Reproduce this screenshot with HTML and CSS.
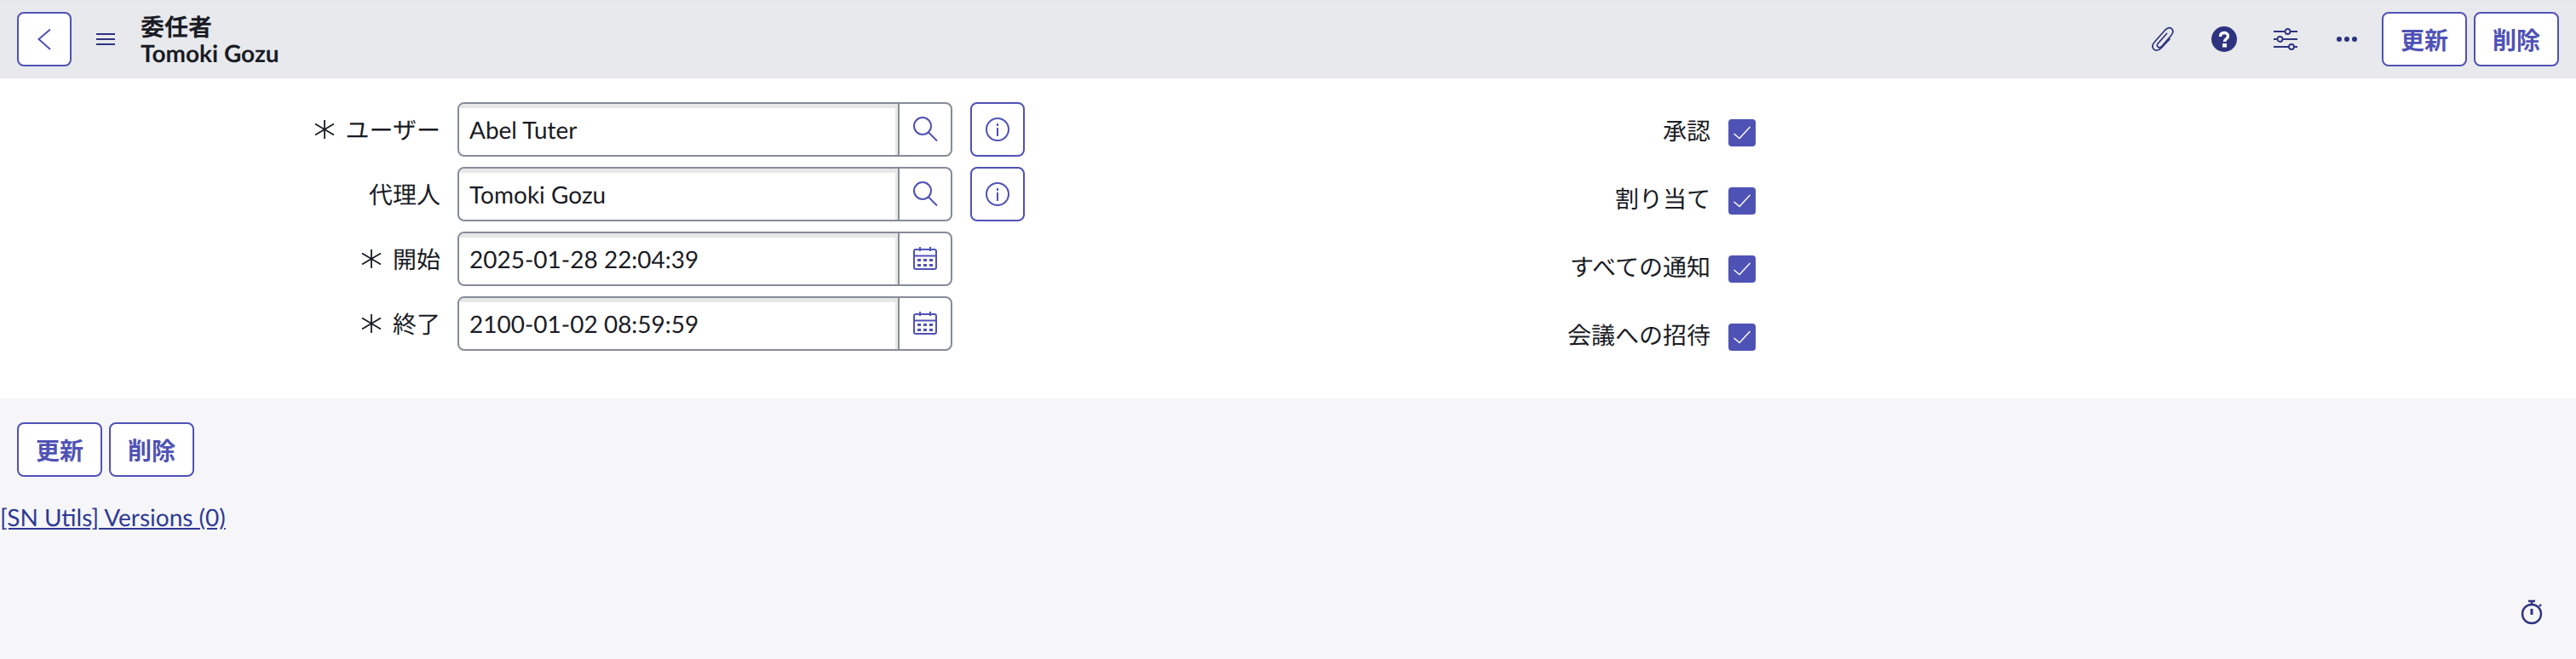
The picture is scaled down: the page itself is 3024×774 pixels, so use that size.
FILE: index.html
```html
<!DOCTYPE html>
<html lang="ja">
<head>
  <meta charset="UTF-8" />
  <title>委任者 Tomoki Gozu</title>
  <link rel="stylesheet" href="styles.css">
</head>
<body>
  <header class="form-header">
    <button class="btn btn-icon back-btn" aria-label="戻る">
      <svg width="64" height="64" viewBox="0 0 64 64" fill="none" stroke="currentColor" stroke-width="2"><path d="M39 20.500 L25.500 32 L39 44"/></svg>
    </button>
    <svg class="menu-icon" width="22" height="16" viewBox="0 0 22 16" fill="none" stroke="currentColor" stroke-width="2"><path d="M0 2h22M0 8h22M0 14h22"/></svg>
    <div class="title">
      <div>委任者</div>
      <div>Tomoki Gozu</div>
    </div>
    <div class="header-actions">
      <span class="tool">
        <svg width="26" height="30" viewBox="0 0 26 30" fill="none" stroke="currentColor" stroke-width="1.700" stroke-linecap="round"><path d="M21 15 L11 25.500 C8 28.500 4 28.800 2.300 26.800 C.3 24.500 .7 21 3.500 18 L15 5 C18 1.800 21 .6 23.500 2.800 C25.800 5 25 8 22.500 11 L12 23 C10 25 8 25 7 24 C6 23 6.200 21.300 7.500 19.800 L17.500 8.500"/></svg>
      </span>
      <span class="tool">
        <svg width="30" height="30" viewBox="0 0 30 30"><circle cx="15" cy="15" r="15" fill="currentColor"/><path d="M10.500 12 C10.500 9 12.500 7.500 15 7.500 C17.500 7.500 19.500 9 19.500 11.500 C19.500 14.500 15.500 14.500 15.500 18" fill="none" stroke="#fff" stroke-width="3.400"/><rect x="13" y="20" width="5" height="4.500" fill="#fff"/></svg>
      </span>
      <span class="tool">
        <svg width="28" height="26" viewBox="0 0 28 26" fill="none" stroke="currentColor" stroke-width="1.800"><path d="M0 4h13M20 4h8M0 13h4M11 13h17M0 22h18M24 22h4"/><circle cx="16.500" cy="4" r="3"/><circle cx="7.500" cy="13" r="3"/><circle cx="21" cy="22" r="3"/></svg>
      </span>
      <span class="tool">
        <svg width="24" height="6" viewBox="0 0 24 6" fill="currentColor"><circle cx="3" cy="3" r="3"/><circle cx="12" cy="3" r="3"/><circle cx="21" cy="3" r="3"/></svg>
      </span>
    </div>
    <div class="btn-group">
      <button class="btn btn-text">更新</button>
      <button class="btn btn-text">削除</button>
    </div>
  </header>

  <main class="form-body">
    <section class="col-left">
      <div class="field-row">
        <label class="field-label">
          <svg class="req" width="24" height="22" viewBox="0 0 24 22" fill="none" stroke="currentColor" stroke-width="1.800"><path d="M12 0v22M1 4.500 L23 17.500M23 4.500 L1 17.500"/></svg>
          ユーザー
        </label>
        <div class="field">
          <div class="field-value">Abel Tuter</div>
          <span class="field-addon">
            <svg width="30" height="30" viewBox="0 0 30 30" fill="none" stroke="currentColor" stroke-width="2"><circle cx="12" cy="11" r="10"/><path d="M19 18.500 L29 28.500"/></svg>
          </span>
        </div>
        <button class="btn btn-icon info-btn" aria-label="情報">
          <svg width="30" height="30" viewBox="0 0 30 30" fill="none" stroke="currentColor" stroke-width="2"><circle cx="15" cy="15" r="13"/><path d="M15 13v10"/><path d="M15 8v3"/></svg>
        </button>
      </div>
      <div class="field-row">
        <label class="field-label">代理人</label>
        <div class="field">
          <div class="field-value">Tomoki Gozu</div>
          <span class="field-addon">
            <svg width="30" height="30" viewBox="0 0 30 30" fill="none" stroke="currentColor" stroke-width="2"><circle cx="12" cy="11" r="10"/><path d="M19 18.500 L29 28.500"/></svg>
          </span>
        </div>
        <button class="btn btn-icon info-btn" aria-label="情報">
          <svg width="30" height="30" viewBox="0 0 30 30" fill="none" stroke="currentColor" stroke-width="2"><circle cx="15" cy="15" r="13"/><path d="M15 13v10"/><path d="M15 8v3"/></svg>
        </button>
      </div>
      <div class="field-row">
        <label class="field-label">
          <svg class="req" width="24" height="22" viewBox="0 0 24 22" fill="none" stroke="currentColor" stroke-width="1.800"><path d="M12 0v22M1 4.500 L23 17.500M23 4.500 L1 17.500"/></svg>
          開始
        </label>
        <div class="field">
          <div class="field-value">2025-01-28 22:04:39</div>
          <span class="field-addon">
            <svg width="28" height="28" viewBox="0 0 28 28" fill="currentColor"><rect x="1" y="3" width="26" height="23" rx="2" fill="none" stroke="currentColor" stroke-width="2"/><path d="M1 10.500h26" stroke="currentColor" stroke-width="2"/><path d="M8 0v5M20 0v5" stroke="currentColor" stroke-width="2"/><rect x="5" y="14" width="4" height="3"/><rect x="12" y="14" width="4" height="3"/><rect x="19" y="14" width="4" height="3"/><rect x="5" y="20" width="4" height="3"/><rect x="12" y="20" width="4" height="3"/><rect x="19" y="20" width="4" height="3"/></svg>
          </span>
        </div>
      </div>
      <div class="field-row">
        <label class="field-label">
          <svg class="req" width="24" height="22" viewBox="0 0 24 22" fill="none" stroke="currentColor" stroke-width="1.800"><path d="M12 0v22M1 4.500 L23 17.500M23 4.500 L1 17.500"/></svg>
          終了
        </label>
        <div class="field">
          <div class="field-value">2100-01-02 08:59:59</div>
          <span class="field-addon">
            <svg width="28" height="28" viewBox="0 0 28 28" fill="currentColor"><rect x="1" y="3" width="26" height="23" rx="2" fill="none" stroke="currentColor" stroke-width="2"/><path d="M1 10.500h26" stroke="currentColor" stroke-width="2"/><path d="M8 0v5M20 0v5" stroke="currentColor" stroke-width="2"/><rect x="5" y="14" width="4" height="3"/><rect x="12" y="14" width="4" height="3"/><rect x="19" y="14" width="4" height="3"/><rect x="5" y="20" width="4" height="3"/><rect x="12" y="20" width="4" height="3"/><rect x="19" y="20" width="4" height="3"/></svg>
          </span>
        </div>
      </div>
    </section>

    <section class="col-right">
      <div class="check-row">
        <span class="check-label">承認</span>
        <span class="checkbox"><svg width="20" height="16" viewBox="0 0 20 16" fill="none" stroke="#fff" stroke-width="1.500"><path d="M.5 9 L7 14.500 L19.500 1"/></svg></span>
      </div>
      <div class="check-row">
        <span class="check-label">割り当て</span>
        <span class="checkbox"><svg width="20" height="16" viewBox="0 0 20 16" fill="none" stroke="#fff" stroke-width="1.500"><path d="M.5 9 L7 14.500 L19.500 1"/></svg></span>
      </div>
      <div class="check-row">
        <span class="check-label">すべての通知</span>
        <span class="checkbox"><svg width="20" height="16" viewBox="0 0 20 16" fill="none" stroke="#fff" stroke-width="1.500"><path d="M.5 9 L7 14.500 L19.500 1"/></svg></span>
      </div>
      <div class="check-row">
        <span class="check-label">会議への招待</span>
        <span class="checkbox"><svg width="20" height="16" viewBox="0 0 20 16" fill="none" stroke="#fff" stroke-width="1.500"><path d="M.5 9 L7 14.500 L19.500 1"/></svg></span>
      </div>
    </section>
  </main>

  <div class="form-footer">
    <div class="btn-group footer-btns">
      <button class="btn btn-text">更新</button>
      <button class="btn btn-text">削除</button>
    </div>
    <a class="versions-link" href="#">[SN Utils] Versions (0)</a>
  </div>

  <svg class="timer" width="26" height="30" viewBox="0 0 26 30" fill="none" stroke="currentColor" stroke-width="2.400"><circle cx="13" cy="17" r="11"/><path d="M9 2h8M13 2v4"/><path d="M13 11v7" stroke-width="3"/><path d="M22 8l2-2"/></svg>
</body>
</html>
```

FILE: styles.css
```css
:root {
  --indigo: #4f52b5;
  --navy: #2e3380;
  --text-color: #1a1c25;
  --border-grey: #868b98;
  --header-bg: #e8e9ed;
  --page-bg: #f6f6f9;
}

* {
  box-sizing: border-box;
}

body {
  margin: 0;
  min-height: 100vh;
  background-color: var(--page-bg);
  color: var(--text-color);
  font-family: 'Lato', 'Noto Sans CJK JP', sans-serif;
  font-size: 28px;
  text-rendering: geometricPrecision;
  overflow: hidden;
}

.form-header {
  display: flex;
  align-items: center;
  height: 92px;
  padding: 0 20px 2px 20px;
  background-color: var(--header-bg);
  border-top: 2px solid #e5e6e6;
}

.btn {
  background-color: #fff;
  border: 2px solid var(--indigo);
  border-radius: 8px;
  color: var(--indigo);
  cursor: pointer;
  font-family: inherit;
  padding: 0;
  height: 64px;
}

.btn-icon {
  display: flex;
  align-items: center;
  justify-content: center;
  width: 64px;
  flex-shrink: 0;
}

.back-btn svg {
  flex-shrink: 0;
}

.menu-icon {
  color: var(--navy);
  margin-left: 29px;
}

.title {
  margin-left: 30px;
  font-size: 28px;
  font-weight: 700;
  line-height: 32px;
}

.title div:last-child {
  margin-top: -1px;
}

.header-actions {
  display: flex;
  align-items: center;
  margin-left: auto;
  margin-right: 5px;
  color: var(--navy);
}

.tool {
  display: flex;
  align-items: center;
  justify-content: center;
  width: 72px;
}

.btn-group {
  display: flex;
  gap: 8px;
}

.btn-text {
  width: 100px;
  font-size: 28px;
  font-weight: 700;
}

.form-body {
  display: flex;
  height: 376px;
  padding-top: 28px;
  background-color: #fff;
}

.col-left {
  display: flex;
  flex-direction: column;
  gap: 12px;
  width: 1512px;
}

.field-row {
  display: flex;
  align-items: center;
  height: 64px;
}

.field-label {
  display: flex;
  justify-content: flex-end;
  align-items: center;
  width: 517px;
  margin-right: 20px;
}

.req {
  margin-right: 13px;
}

.field {
  display: flex;
  width: 581px;
  height: 64px;
  background-color: #fff;
  border: 2px solid var(--border-grey);
  border-radius: 8px;
  overflow: hidden;
}

.field-value {
  flex: 1;
  padding: 3px 12px 0;
  line-height: 54px;
  box-shadow: inset 0 5px 0 #e6e8e8, inset -3px 0 0 #e6e8e8;
}

.field-addon {
  display: flex;
  align-items: center;
  justify-content: center;
  width: 62px;
  border-left: 2px solid var(--border-grey);
  color: var(--indigo);
}

.info-btn {
  margin-left: 21px;
}

.col-right {
  display: flex;
  flex-direction: column;
  gap: 8px;
}

.check-row {
  display: flex;
  align-items: center;
  justify-content: flex-end;
  height: 72px;
  width: 549px;
}

.check-label {
  margin-right: 21px;
  margin-top: -6px;
}

.checkbox {
  display: flex;
  align-items: center;
  justify-content: center;
  width: 32px;
  height: 32px;
  background-color: var(--indigo);
  border-radius: 4px;
}

.form-footer {
  padding-top: 28px;
}

.footer-btns {
  padding-left: 20px;
}

.versions-link {
  display: inline-block;
  margin-top: 28px;
  color: #2e3a94;
  line-height: 38px;
}

.timer {
  position: absolute;
  left: 2959px;
  top: 704px;
  color: var(--navy);
}
```
